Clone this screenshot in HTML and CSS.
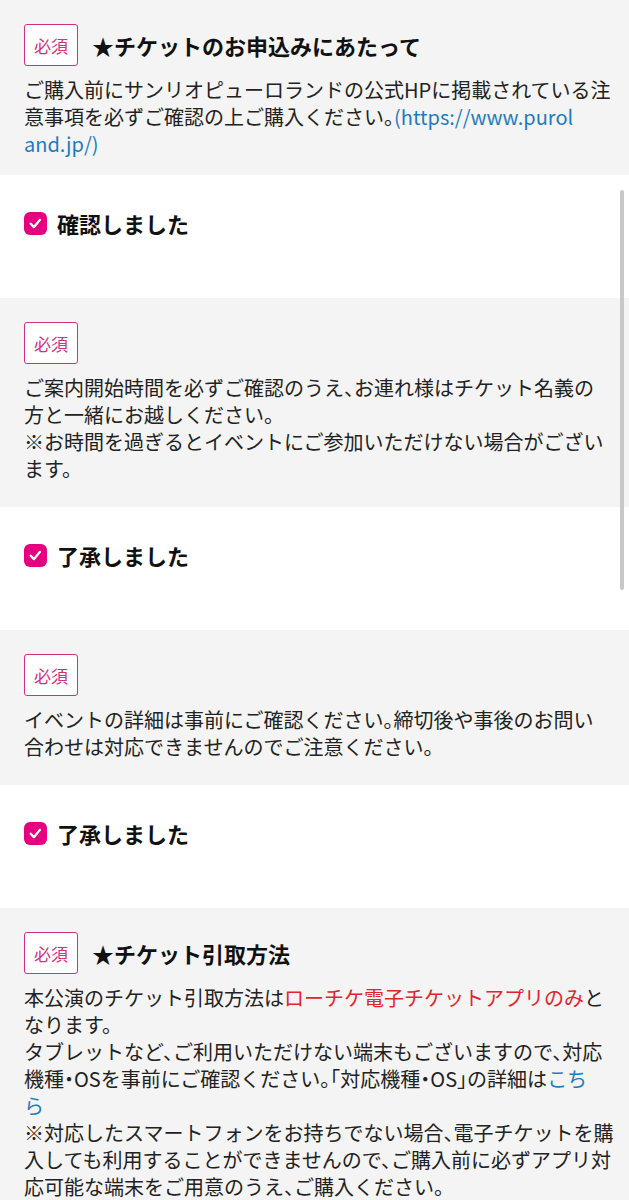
FILE: index.html
```html
<!DOCTYPE html>
<html lang="ja">
  <head>
    <meta charset="UTF-8" />
    <title>チケットのお申込み</title>
    <link rel="stylesheet" href="styles.css">
  </head>
  <body>
    <main class="form">
      <section class="notice first">
        <div class="notice-head">
          <span class="badge">必須</span>
          <h2>★チケットのお申込みにあたって</h2>
        </div>
        <p>ご購入前にサンリオピューロランドの公式HPに掲載されている注<br>意事項を必ずご確認の上ご購入ください。<a href="#">(https://www.purol<br>and.jp/)</a></p>
      </section>
      <div class="agree">
        <label><span class="check"><svg viewBox="0 0 24 24" width="24" height="24"><path d="M7 12.2l3.3 3.6 6.4-7.6" fill="none" stroke="#fff" stroke-width="2.4" stroke-linecap="round" stroke-linejoin="round"/></svg></span>確認しました</label>
      </div>

      <section class="notice">
        <div class="notice-head">
          <span class="badge">必須</span>
        </div>
        <p>ご案内開始時間を必ずご確認のうえ、お連れ様はチケット名義の<br>方と一緒にお越しください。<br>※お時間を過ぎるとイベントにご参加いただけない場合がござい<br>ます。</p>
      </section>
      <div class="agree">
        <label><span class="check"><svg viewBox="0 0 24 24" width="24" height="24"><path d="M7 12.2l3.3 3.6 6.4-7.6" fill="none" stroke="#fff" stroke-width="2.4" stroke-linecap="round" stroke-linejoin="round"/></svg></span>了承しました</label>
      </div>

      <section class="notice">
        <div class="notice-head">
          <span class="badge">必須</span>
        </div>
        <p>イベントの詳細は事前にご確認ください。締切後や事後のお問い<br>合わせは対応できませんのでご注意ください。</p>
      </section>
      <div class="agree">
        <label><span class="check"><svg viewBox="0 0 24 24" width="24" height="24"><path d="M7 12.2l3.3 3.6 6.4-7.6" fill="none" stroke="#fff" stroke-width="2.4" stroke-linecap="round" stroke-linejoin="round"/></svg></span>了承しました</label>
      </div>

      <section class="notice">
        <div class="notice-head">
          <span class="badge">必須</span>
          <h2>★チケット引取方法</h2>
        </div>
        <p>本公演のチケット引取方法は<span class="em">ローチケ電子チケットアプリのみ</span>と<br>なります。<br>タブレットなど、ご利用いただけない端末もございますので、対応<br>機種・OSを事前にご確認ください。「対応機種・OS」の詳細は<a href="#">こち<br>ら</a><br>※対応したスマートフォンをお持ちでない場合、電子チケットを購<br>入しても利用することができませんので、ご購入前に必ずアプリ対<br>応可能な端末をご用意のうえ、ご購入ください。</p>
      </section>
    </main>

    <div class="scrollbar"></div>
  </body>
</html>
```

FILE: styles.css
```css
* {
  box-sizing: border-box;
}

body {
  margin: 0;
  font-family: "Noto Sans CJK JP", "Noto Sans", sans-serif;
  background: #fff;
  color: #222;
  height: 1200px;
  overflow: hidden;
}

.notice {
  background: #f4f4f4;
  padding: 24px 24px 25px;
}

.notice.first {
  padding-bottom: 18px;
}

.notice-head {
  display: flex;
  align-items: center;
  gap: 14px;
}

.badge {
  width: 54px;
  height: 42px;
  display: flex;
  align-items: center;
  justify-content: center;
  background: #fff;
  border: 1.5px solid #d4307f;
  border-radius: 3px;
  color: #d4307f;
  font-size: 17px;
}

h2 {
  margin: 0;
  font-size: 22px;
  font-weight: bold;
  color: #111;
}

.notice p {
  margin: 10px 0 0;
  font-size: 20px;
  line-height: 27px;
  white-space: nowrap;
  font-feature-settings: "halt";
}

.notice a {
  color: #1f7bc0;
  text-decoration: none;
}

.em {
  color: #e0252d;
}

.agree {
  padding: 33px 24px 60px;
}

.agree label {
  display: flex;
  align-items: center;
  gap: 10px;
  font-size: 22px;
  line-height: 30px;
  font-weight: bold;
  color: #111;
}

.check {
  width: 23px;
  height: 23px;
  border-radius: 6px;
  background: #e4007f;
  display: flex;
  align-items: center;
  justify-content: center;
}

.check svg {
  width: 23px;
  height: 23px;
}

.scrollbar {
  position: absolute;
  left: 620px;
  top: 190px;
  width: 4px;
  height: 400px;
  border-radius: 2px;
  background: #c8c8c8;
}
```
